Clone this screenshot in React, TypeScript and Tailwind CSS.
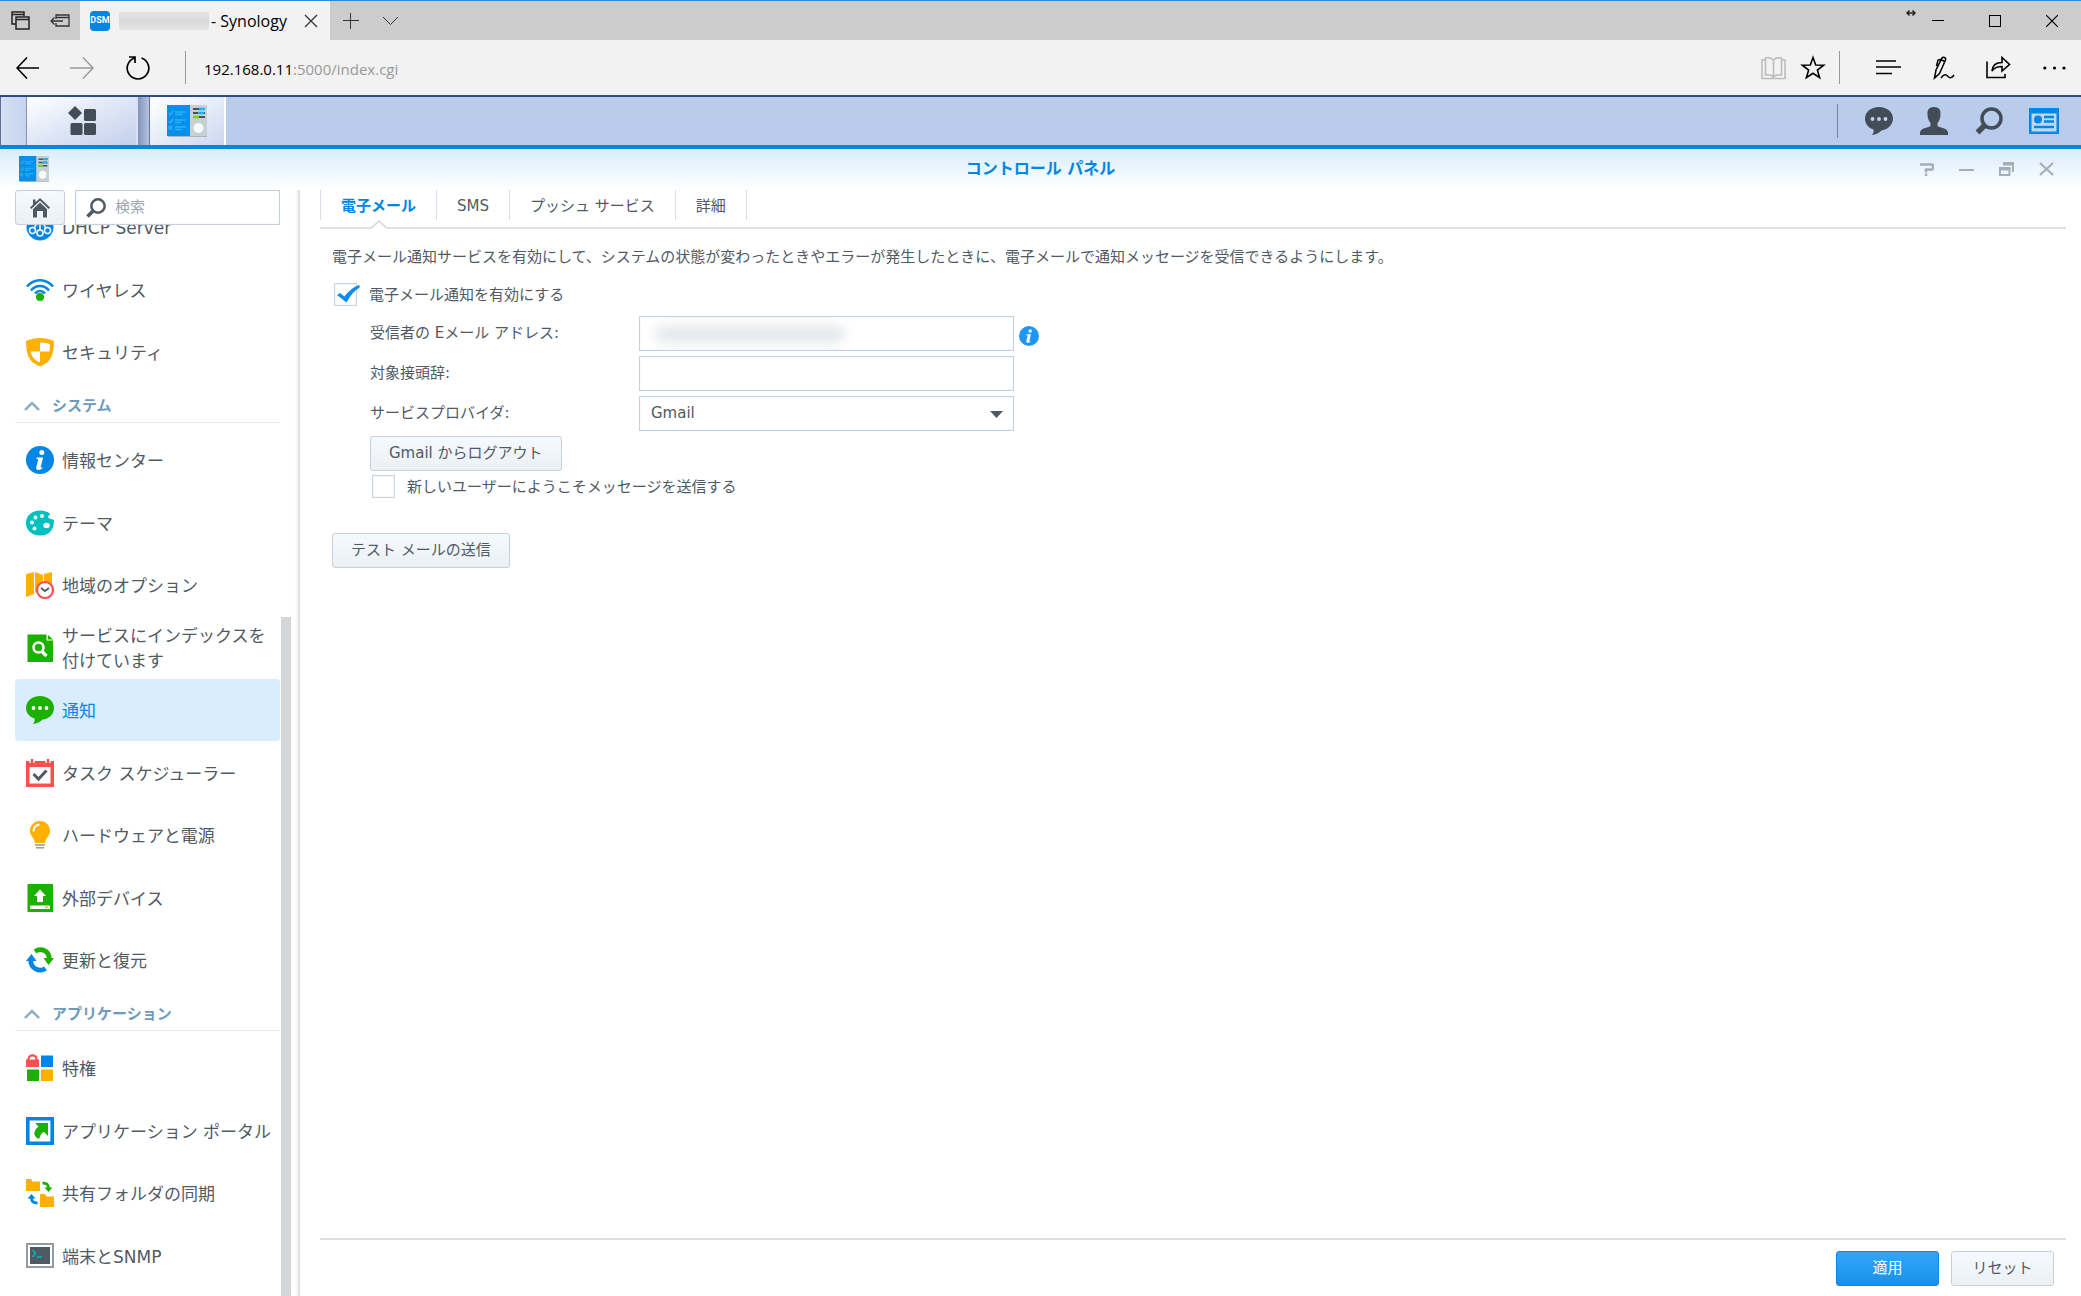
import type { ReactNode } from "react";

const Svg = ({ w, h, children }: { w: number; h: number; children: ReactNode }) => (
  <svg width={w} height={h} viewBox={`0 0 ${w} ${h}`} fill="none" className="shrink-0" aria-hidden="true">
    {children}
  </svg>
);

const ControlPanelIcon = ({ w, h }: { w: number; h: number }) => (
  <svg width={w} height={h} viewBox="0 0 40 32" preserveAspectRatio="none" className="shrink-0" aria-hidden="true">
    <rect x="1" y="2" width="39" height="30" fill="#8d9499" opacity=".6" />
    <rect x="22" width="18" height="31" fill="#c9d0d4" />
    <rect width="23" height="31" fill="#0a8fe8" />
    <g stroke="#26b4ff" strokeWidth="1.3" fill="none">
      <path d="M2 8l1.5 1.5L6 6M2 16l1.5 1.5L6 14" />
      <circle cx="3.500" cy="23" r="1.500" />
      <path d="M8 7h11M8 9.500h8M8 15h11M8 17.500h6M8 22h11M8 24.500h7" />
    </g>
    <path d="M26 4h12M26 8h12M26 12h12" stroke="#4a545c" strokeWidth="2" />
    <path d="M32 4h6M31 8h6" stroke="#15b8f5" strokeWidth="2.500" />
    <path d="M26 12h6" stroke="#78d400" strokeWidth="2.500" />
    <circle cx="31.500" cy="23" r="5" fill="#f2fbff" />
  </svg>
);

const TitleBar = () => (
  <header className="flex h-10 items-stretch border-t border-[#2b88d8] bg-[#cccccc] font-['Open_Sans','Noto_Sans',sans-serif]">
    <div className="flex w-20 items-center gap-5 pl-[11px]">
      <button aria-label="Tabs you set aside">
        <Svg w={19} h={19}>
          <path d="M5 13H1V1h12v4M1 3.500h12M5 6h13v12H5zM5 8.500h13" stroke="#222" strokeWidth="1.500" />
        </Svg>
      </button>
      <button aria-label="Set tabs aside">
        <Svg w={20} h={14}>
          <path d="M6 5V1h13v11H6V9M6 3.500h13M1 7h12M4.500 3.500L1 7l3.500 3.500" stroke="#333" strokeWidth="1.300" />
        </Svg>
      </button>
    </div>
    <div className="flex w-[250px] items-center bg-[#f2f2f2] pr-3 pl-[10px]">
      <span className="flex size-5 items-center justify-center rounded-sm bg-[#0086e5] font-['Roboto',sans-serif] text-[9px] font-bold text-white">
        DSM
      </span>
      <span className="ml-[9px] h-[18px] w-[90px] bg-linear-to-b from-[#e3e3e3] via-[#d9d9d9] to-[#e3e3e3]" />
      <span className="ml-[2px] flex-1 text-base leading-5 whitespace-nowrap text-black">- Synology</span>
      <button aria-label="Close tab">
        <Svg w={14} h={14}>
          <path d="M1 1l12 12M13 1L1 13" stroke="#333" strokeWidth="1.300" />
        </Svg>
      </button>
    </div>
    <div className="flex items-center gap-6 pl-[13px]">
      <button aria-label="New tab">
        <Svg w={16} h={16}>
          <path d="M7.500 0v16M0 7.500h16" stroke="#333" />
        </Svg>
      </button>
      <button aria-label="Show tab previews">
        <Svg w={16} h={10}>
          <path d="M0 1l7.500 7.500L15 1" stroke="#333" />
        </Svg>
      </button>
    </div>
    <div className="ml-auto flex pr-2">
      <span className="pt-[8px]">
        <Svg w={10} h={8}>
          <path d="M2 4h6M3.500 1.500L1 4l2.500 2.500M6.500 1.500L9 4 6.500 6.500" stroke="#222" strokeWidth="1.500" />
        </Svg>
      </span>
      <button aria-label="Minimize" className="flex w-[43px] items-center justify-center">
        <Svg w={12} h={12}>
          <path d="M0 5.500h12" stroke="#000" />
        </Svg>
      </button>
      <button aria-label="Maximize" className="flex w-[71px] items-center justify-center">
        <Svg w={12} h={12}>
          <rect x=".5" y=".5" width="11" height="11" stroke="#000" />
        </Svg>
      </button>
      <button aria-label="Close" className="flex w-[43px] items-center justify-center">
        <Svg w={12} h={12}>
          <path d="M0 0l12 12M12 0L0 12" stroke="#000" strokeWidth="1.200" />
        </Svg>
      </button>
    </div>
  </header>
);

const AddressBar = () => (
  <div className="flex h-[55px] items-center bg-[#f2f2f2] font-['Open_Sans','Noto_Sans',sans-serif]">
    <button aria-label="Back" className="ml-4">
      <Svg w={24} h={24}>
        <path d="M23 12H1M11 1.500L1 12l10 10.500" stroke="#000" strokeWidth="1.600" />
      </Svg>
    </button>
    <button aria-label="Forward" className="ml-[30px]" disabled>
      <Svg w={24} h={24}>
        <path d="M0 12h23M13 1.500L23 12 13 22.500" stroke="#999" strokeWidth="1.400" />
      </Svg>
    </button>
    <button aria-label="Refresh" className="ml-8">
      <Svg w={24} h={24}>
        <path d="M15.500 2A10.800 10.800 0 1 1 8.500 2M3 1h6v6" stroke="#000" strokeWidth="1.700" />
      </Svg>
    </button>
    <span className="ml-[35px] h-[33px] w-px bg-[#999]" />
    <div role="textbox" aria-label="Address" className="ml-[18px] pt-[2px] text-[15px] leading-5 text-[#999]">
      <span className="text-black">192.168.0.11</span>:5000/index.cgi
    </div>
    <div className="ml-auto flex items-center pr-[15px]">
      <button aria-label="Reading view" disabled>
        <Svg w={25} h={24}>
          <path
            d="M12.500 4v17M12.500 4C10 1.500 7 1.500 4.500 2v17c3-.5 6-.3 8 2 2-2.300 5-2.500 8-2V2c-2.500-.5-5.500-.5-8 2M4.500 4H1v18.500h23V4h-3.500"
            stroke="#bbb"
            strokeWidth="1.500"
          />
        </Svg>
      </button>
      <button aria-label="Add to favorites" className="ml-[14px]">
        <Svg w={26} h={25}>
          <path d="M13 2.500l2.700 7.500 8 .2-6.300 4.900 2.200 7.600-6.600-4.400-6.600 4.400 2.200-7.600-6.300-4.900 8-.2z" stroke="#000" strokeWidth="1.600" />
        </Svg>
      </button>
      <span className="ml-[13px] h-[33px] w-px bg-[#999]" />
      <button aria-label="Hub" className="ml-9">
        <Svg w={25} h={24}>
          <path d="M0 5h20M0 11h25M0 17.500h16" stroke="#000" strokeWidth="1.500" />
        </Svg>
      </button>
      <button aria-label="Make a web note" className="ml-8">
        <Svg w={23} h={24}>
          <path
            d="M1.500 22L3 14 9 2c1-1.500 4.500-.5 3.500 2l-6 13.500zM8.500 4l3.500 1.500M9 3L5 4 3.500 10M8 22c3-4 5-4 7-1.500 2 2 4 1.500 6-1.500"
            stroke="#000"
            strokeWidth="1.500"
          />
        </Svg>
      </button>
      <button aria-label="Share" className="ml-[30px]">
        <Svg w={25} h={24}>
          <path d="M1 5.500v16h18V18M6 15c.5-6 4-8.500 10-8.500V1.500l7.500 7-7.500 6.500v-4.500C11 10.500 8 12 6 15z" stroke="#000" strokeWidth="1.600" />
        </Svg>
      </button>
      <button aria-label="More" className="ml-8">
        <Svg w={23} h={24}>
          <g fill="#000">
            <circle cx="1.800" cy="12" r="1.600" />
            <circle cx="11.500" cy="12" r="1.600" />
            <circle cx="21" cy="12" r="1.600" />
          </g>
        </Svg>
      </button>
    </div>
  </div>
);

const TaskBar = () => (
  <nav className="flex h-[54px] border-t-2 border-b-4 border-t-[#2a4a86] border-b-[#0086e5] bg-linear-to-b from-[#b9ceeb] to-[#b9caeb]">
    <div className="w-[27px] border-x border-l-[#5d6f92] border-r-[#8593ae] bg-linear-to-r from-[#d5e0f3] to-[#c6d3ee]" />
    <button
      aria-label="Main menu"
      className="flex w-[111px] items-center justify-center border-r-2 border-[#d8e1f3] bg-linear-to-br from-white via-[#dfe6f5] to-[#c3d0ec]"
    >
      <Svg w={30} h={30}>
        <g fill="#434d58">
          <path d="M8 0l7 7-7 7-7-7z" />
          <rect x="17" y="3" width="12" height="12" rx="1.500" />
          <rect x="3.500" y="17" width="12" height="12" rx="1.500" />
          <rect x="17" y="17" width="12" height="12" rx="1.500" />
        </g>
      </Svg>
    </button>
    <div className="w-[11px] bg-linear-to-r from-[#8294b8] to-[#b3c3e2]" />
    <button
      aria-label="コントロール パネル"
      className="flex w-[77px] items-center justify-center border-r-2 border-l border-l-[#66779c] border-r-white bg-linear-to-br from-white via-[#e6ecf8] to-[#ccd8f0]"
    >
      <ControlPanelIcon w={40} h={32} />
    </button>
    <div className="ml-auto flex items-center pr-[22px]">
      <span className="h-[34px] w-px bg-[#74839f]" />
      <button aria-label="Notifications" className="ml-[27px]">
        <Svg w={28} h={28}>
          <path d="M14 0c8 0 14 5 14 11.500C28 18 22 23 16.500 23.500 14 26 11 27.500 7 28c1.500-2 2-3.500 1.500-5.500C3.500 21 0 17 0 11.500 0 5 6 0 14 0z" fill="#434d58" />
          <g fill="#c3d3ee">
            <circle cx="7.500" cy="12" r="1.900" />
            <circle cx="14" cy="12" r="1.900" />
            <circle cx="20.500" cy="12" r="1.900" />
          </g>
        </Svg>
      </button>
      <button aria-label="User" className="ml-[27px]">
        <Svg w={28} h={28}>
          <path
            d="M14 0c5 0 7 3 6.500 7.500 0 4-1.500 6.500-3 8.500v3c3 2 10 2 10.500 6.500V28H0v-2.500C.5 21 7.500 21 10.500 19v-3c-1.500-2-3-4.500-3-8.500C7 3 9 0 14 0z"
            fill="#434d58"
          />
        </Svg>
      </button>
      <button aria-label="Search" className="ml-[27px]">
        <Svg w={28} h={28}>
          <circle cx="16.500" cy="11.500" r="9.500" stroke="#434d58" strokeWidth="3.500" />
          <path d="M9 19l-6.500 6.500" stroke="#434d58" strokeWidth="5.500" />
        </Svg>
      </button>
      <button aria-label="Widgets" className="ml-[26px]">
        <Svg w={30} h={26}>
          <path d="M0 0h30v26H0z" fill="#0086e5" />
          <path d="M2.500 5.500h25v18h-25z" fill="#c3d6f1" />
          <circle cx="9" cy="11.500" r="4" fill="#0086e5" />
          <path d="M15 9h10M15 13.500h10M5 19h20" stroke="#0086e5" strokeWidth="2.300" />
        </Svg>
      </button>
    </div>
  </nav>
);

const WindowHeader = () => (
  <div className="grid h-[41px] grid-cols-[1fr_auto_1fr] items-center bg-linear-to-b from-[#d9edfb] to-white px-[19px] pb-[2px]">
    <ControlPanelIcon w={30} h={26} />
    <h1 className="text-base leading-6 font-bold text-[#0086e5]">コントロール パネル</h1>
    <div className="flex items-center justify-end gap-[25px] pr-2">
      <button aria-label="ヘルプ">
        <Svg w={14} h={14}>
          <path d="M0 2.500h11.500q1.500 0 1.500 1.500v2q0 1.500-1.500 1.500H6v3M6 11.500V14" stroke="#a3b0b9" strokeWidth="2.500" />
        </Svg>
      </button>
      <button aria-label="最小化">
        <Svg w={15} h={14}>
          <path d="M0 8h15" stroke="#a3b0b9" strokeWidth="2" />
        </Svg>
      </button>
      <button aria-label="元に戻す">
        <Svg w={15} h={14}>
          <path d="M4 2h10v8M1 7h9.500v6H1z" stroke="#a3b0b9" strokeWidth="2" />
          <path d="M4 0h11v3.500H4zM0 5h11.500v3.500H0z" fill="#a3b0b9" />
        </Svg>
      </button>
      <button aria-label="閉じる">
        <Svg w={15} h={14}>
          <path d="M1 1l13 12M14 1L1 13" stroke="#a3b0b9" strokeWidth="2.200" />
        </Svg>
      </button>
    </div>
  </div>
);

const icons: Record<string, ReactNode> = {
  dhcp: (
    <>
      <circle cx="14" cy="14" r="13.500" fill="#0086e5" />
      <g stroke="#fff" strokeWidth="1.500">
        <circle cx="6.500" cy="17.500" r="3" />
        <circle cx="14" cy="20" r="3" />
        <circle cx="21.500" cy="17.500" r="3" />
        <path d="M14 8v9M8 15l4-6M20 15l-4-6" />
      </g>
    </>
  ),
  wireless: (
    <>
      <path d="M1 10.500C8 2 20 2 27 10.500M5 14.500c5-6 13-6 18 0M9 17.500c3-3.500 7-3.500 10 0" stroke="#0086e5" strokeWidth="2.500" />
      <circle cx="14" cy="21" r="4" fill="#1eb000" />
    </>
  ),
  security: (
    <>
      <path d="M0 3c9-4 19-4 28 0-.5 12-1 20-14 25.500C1 23 .5 15 0 3z" fill="#ffb000" />
      <path d="M14 4.500c4 0 7 .6 10 1.500l-.5 7.500H14zM14 13.500v10.800C8.500 22 5.500 19 4.700 13.500z" fill="#fff" />
    </>
  ),
  info: (
    <>
      <circle cx="14" cy="14" r="14" fill="#0086e5" />
      <circle cx="15.800" cy="6.500" r="2.500" fill="#fff" />
      <path d="M10.500 11.500h6.700l-2.500 9.500c0 1 1 .8 2.300.3-1 3-7.500 4-6.800.2l2-8c-.5-.6-1.200-.6-1.700-.6z" fill="#fff" />
    </>
  ),
  theme: (
    <>
      <path d="M14 1.500c4 0 8 1.500 10.500 3.500-2 1.500-3.500 3-1 4.500 1.500.8 3.500.5 4.500 1.500 0 8-3 15.500-14 15.500C6 26.500 0 21.500 0 14S6 1.500 14 1.500z" fill="#00bfc0" />
      <g fill="#fff">
        <circle cx="9.500" cy="8.500" r="2" />
        <circle cx="16" cy="7" r="2" />
        <circle cx="6" cy="13.500" r="2" />
        <circle cx="8.500" cy="19.500" r="2" />
        <ellipse cx="20.500" cy="16.500" rx="3.200" ry="2.800" />
      </g>
    </>
  ),
  region: (
    <>
      <path d="M0 3l8-2v22l-8 3zM9 1l8 3v9l-8 9zM18 3l8-2v12h-8z" fill="#ffb000" />
      <circle cx="19" cy="19" r="8" fill="#fff" stroke="#fa5050" strokeWidth="2.200" />
      <path d="M15 17l4 3 4-3" stroke="#505a64" strokeWidth="1.800" />
    </>
  ),
  index: (
    <>
      <path d="M1.500.5h19v6H27V28H1.500zM22 1l5 4.500h-5z" fill="#1eb000" />
      <circle cx="12.500" cy="13.500" r="5" stroke="#fff" strokeWidth="2.500" />
      <path d="M16 17.500l4.500 4.500" stroke="#fff" strokeWidth="3.200" />
    </>
  ),
  notification: (
    <>
      <path d="M14 0c8 0 14 5 14 12 0 6.500-5 11-11.500 11.500C14 26 11 27.500 7 28c1.500-2 2-3.500 1.500-5.500C3.500 21 0 17 0 12 0 5 6 0 14 0z" fill="#1eb000" />
      <g fill="#fff">
        <circle cx="7.500" cy="12" r="1.900" />
        <circle cx="14" cy="12" r="1.900" />
        <circle cx="20.500" cy="12" r="1.900" />
      </g>
    </>
  ),
  task: (
    <>
      <path d="M0 2h28v26H0z" fill="#fa5050" />
      <path d="M3.500 8h21v16.500h-21zM3.500 0h5v4h-5zM19.500 0h5v4h-5z" fill="#fff" />
      <path d="M6 0v5M22 0v5" stroke="#fa5050" strokeWidth="2.500" />
      <path d="M7.500 15l5 5 8-8.500" stroke="#505a64" strokeWidth="3" />
    </>
  ),
  hardware: (
    <>
      <path d="M14 0c6 0 10 4.500 10 10 0 5-4.500 7-5 12H9c-.5-5-5-7-5-12C4 4.500 8 0 14 0z" fill="#ffb000" />
      <path d="M7.500 10.500c0-4 2.500-6.500 6-7" stroke="#fff" strokeWidth="2" />
      <path d="M9 24h10M10 26.700h8" stroke="#8f9ba5" strokeWidth="1.500" />
    </>
  ),
  external: (
    <>
      <path d="M1.500 0H27v28H1.500z" fill="#1eb000" />
      <path d="M14 5.500l6 6.500h-3v6h-6v-6H8zM4 21.500h20v3.500H4z" fill="#fff" />
      <path d="M19 23.300h3" stroke="#ffb000" strokeWidth="1.500" />
    </>
  ),
  update: (
    <>
      <path d="M9 5.500c6-4 14-1 14.200 7" stroke="#1eb000" strokeWidth="4.800" />
      <path d="M17.500 12H28l-5.500 7z" fill="#1eb000" />
      <path d="M19.500 22.500c-6 4-14.500 0-14.700-7.500" stroke="#0086e5" strokeWidth="4.800" />
      <path d="M10.500 15H0l5.500-7z" fill="#0086e5" />
    </>
  ),
  privilege: (
    <>
      <path d="M0 5.500h13V13H0z" fill="#fa5050" />
      <path d="M2.500 7V5.500c0-5.500 8-5.500 8 0V7" stroke="#fa5050" strokeWidth="2.300" />
      <path d="M15 1.500h12V13H15z" fill="#0086e5" />
      <path d="M1 15.500h12V27H1z" fill="#1eb000" />
      <path d="M15 15.500h12V27H15z" fill="#ffb000" />
    </>
  ),
  portal: (
    <>
      <path d="M1.800 1.800h24.400v24.400H1.800z" fill="#fff" stroke="#0086e5" strokeWidth="3.600" />
      <path d="M9 6h13v13l-4-4c-3 1-3.500 4-5 7-5-2-7-7-.5-12.500z" fill="#1eb000" />
    </>
  ),
  sync: (
    <>
      <path d="M0 0h5l1.500 2.500H14v9.500H0zM14 15h5l1.500 2.500H28V28H14z" fill="#ffb000" />
      <path d="M16.500 4c5 0 6 2 6 5.500" stroke="#1eb000" strokeWidth="3" />
      <path d="M18.500 8.500h8l-4 4.500z" fill="#1eb000" />
      <path d="M11.500 24c-5 0-6-2-6-5" stroke="#0086e5" strokeWidth="3" />
      <path d="M1.500 19.500h8l-4-4.500z" fill="#0086e5" />
    </>
  ),
  terminal: (
    <>
      <path d="M1 2h26v23H1z" fill="#fff" stroke="#8f9ba5" strokeWidth="2" />
      <path d="M4 5h20v17H4z" fill="#505a64" />
      <path d="M6.500 8l3 3.500-3 3.500M11 15h5" stroke="#00b3b3" strokeWidth="1.700" />
    </>
  ),
};

type Item = { icon: string; label: string };

const networkItems: Item[] = [
  { icon: "dhcp", label: "DHCP Server" },
  { icon: "wireless", label: "ワイヤレス" },
  { icon: "security", label: "セキュリティ" },
];

const systemItems: Item[] = [
  { icon: "info", label: "情報センター" },
  { icon: "theme", label: "テーマ" },
  { icon: "region", label: "地域のオプション" },
  { icon: "index", label: "サービスにインデックスを付けています" },
  { icon: "notification", label: "通知" },
  { icon: "task", label: "タスク スケジューラー" },
  { icon: "hardware", label: "ハードウェアと電源" },
  { icon: "external", label: "外部デバイス" },
  { icon: "update", label: "更新と復元" },
];

const applicationItems: Item[] = [
  { icon: "privilege", label: "特権" },
  { icon: "portal", label: "アプリケーション ポータル" },
  { icon: "sync", label: "共有フォルダの同期" },
  { icon: "terminal", label: "端末とSNMP" },
];

const NavList = ({ items }: { items: Item[] }) => (
  <ul>
    {items.map(({ icon, label }) => {
      const active = icon === "notification";
      return (
        <li key={icon} className="h-[62px] even:h-[63px]">
          <a
            href={`#${icon}`}
            className={`flex h-full items-center gap-2 rounded-sm pl-[11px] text-[17px] leading-[25px] ${
              active ? "bg-[#d9edff] text-[#0086e5]" : "text-[#505a64]"
            }`}
          >
            <Svg w={28} h={28}>
              {icons[icon]}
            </Svg>
            <span className="pt-[3px]">{label}</span>
          </a>
        </li>
      );
    })}
  </ul>
);

const NavHeading = ({ children }: { children: ReactNode }) => (
  <h2 className="mb-[6px] h-10 border-b border-[#e3edf5]">
    <button className="flex h-full w-full items-center gap-3 pt-[7px] pl-[9px] text-[15px] font-bold text-[#6f9bbb]">
      <Svg w={16} h={10}>
        <path d="M1 9l7-7 7 7" stroke="#8fb0c8" strokeWidth="2.500" />
      </Svg>
      {children}
    </button>
  </h2>
);

const SideBar = () => (
  <aside className="flex w-[300px] shrink-0 flex-col border-r-2 border-[#e0e0e0] pl-[15px] shadow-[inset_-3px_0_3px_-2px_#ececec]">
    <div className="flex h-[35px] shrink-0 gap-[10px] pr-[18px]">
      <button
        aria-label="ホーム"
        className="flex w-[50px] items-center justify-center rounded-[3px] border border-[#c6d0dc] bg-linear-to-b from-[#f6faff] to-[#ebf0f5]"
      >
        <Svg w={20} h={20}>
          <path d="M10 0l10 9.500-1.300 1.500L10 2.800 1.300 11 0 9.500zM3 1.500h2.500V5L3 7.300z" fill="#505a64" />
          <path d="M10 4.500l7 6.500v8.500h-4V13H7v6.500H3V11z" fill="#505a64" />
        </Svg>
      </button>
      <label className="flex flex-1 items-center gap-[9px] border border-[#c6d0dc] bg-white pl-[10px] shadow-[inset_0_0_2px_#e4eaf0]">
        <Svg w={20} h={20}>
          <circle cx="12" cy="8" r="6.700" stroke="#505a64" strokeWidth="2.500" />
          <path d="M7 13l-5.500 5.500" stroke="#505a64" strokeWidth="3.800" />
        </Svg>
        <input
          type="text"
          aria-label="検索"
          placeholder="検索"
          className="w-full min-w-0 bg-transparent text-[15px] outline-none placeholder:text-[#9aa5af]"
        />
      </label>
    </div>
    <div className="flex min-h-0 flex-1 overflow-hidden">
      <nav className="-mt-[29px] w-[265px] shrink-0">
        <NavList items={networkItems} />
        <NavHeading>システム</NavHeading>
        <NavList items={systemItems} />
        <NavHeading>アプリケーション</NavHeading>
        <NavList items={applicationItems} />
      </nav>
      <div className="flex w-[11px] flex-col pt-[392px] pl-px">
        <div className="flex-1 bg-[#d4d6d8]" />
      </div>
    </div>
  </aside>
);

const tabs = ["電子メール", "SMS", "プッシュ サービス", "詳細"];

const Tabs = () => (
  <div role="tablist" className="flex h-[39px] shrink-0 items-start border-b-2 border-[#e0e0e0]">
    {tabs.map((tab, i) => (
      <button
        key={tab}
        role="tab"
        aria-selected={i === 0}
        className={`relative h-[30px] border-r border-[#d3deea] px-5 pt-px text-[15px] leading-[30px] ${
          i === 0 ? "border-l font-bold text-[#0086e5]" : "text-[#505a64]"
        }`}
      >
        {tab}
        {i === 0 && (
          <span className="absolute top-[30px] left-[49px]">
            <Svg w={18} h={10}>
              <path d="M0 10V8l2-1 7-6.500L16 7l2 1v2z" fill="#fff" />
              <path d="M0 8l2-.5L9 1l7 6.500 2 .5" stroke="#dadada" strokeWidth="1.700" />
            </Svg>
          </span>
        )}
      </button>
    ))}
  </div>
);

const CheckBox = ({ label, checked }: { label: string; checked?: boolean }) => (
  <label className="flex items-center gap-3 text-[15px] leading-[23px]">
    <span className="relative size-[23px] shrink-0">
      <input type="checkbox" defaultChecked={checked} className="peer block size-[23px] appearance-none border border-[#ccd6df] bg-white shadow-[inset_0_0_2px_#dce3ea]" />
      <span className="pointer-events-none absolute top-[2px] left-[3px] hidden peer-checked:block">
        <Svg w={23} h={18}>
          <path d="M0 10l3-2 4.500 3.500C11 7 16 2 22 0l1 2C17 6 13 11 9.500 17.500z" fill="#0a8cf0" />
        </Svg>
      </span>
    </span>
    <span className="pt-[2px]">{label}</span>
  </label>
);

const fieldClass = "h-[35px] w-[375px] border border-[#c6d0dc] bg-white px-[11px] text-[15px] text-[#505a64] shadow-[inset_0_0_2px_#e4eaf0]";

const buttonClass =
  "h-[35px] rounded-[3px] border border-[#c6d0dc] bg-linear-to-b from-[#f6faff] to-[#ebf0f5] px-[18px] text-[15px] text-[#505a64]";

const EmailForm = () => (
  <form className="flex flex-1 flex-col items-start pt-[17px] pl-3 text-[15px] text-[#505a64]">
    <p className="leading-[23px]">
      電子メール通知サービスを有効にして、システムの状態が変わったときやエラーが発生したときに、電子メールで通知メッセージを受信できるようにします。
    </p>
    <div className="mt-[13px] pl-[2px]">
      <CheckBox label="電子メール通知を有効にする" checked />
    </div>
    <div className="mt-[9px] grid grid-cols-[269px_auto] items-center gap-y-[5px] pl-[38px]">
      <label htmlFor="recipient">受信者の Eメール アドレス:</label>
      <div className="flex items-center gap-[5px]">
        <div className="relative">
          <input id="recipient" type="email" className={`block ${fieldClass}`} />
          <span className="pointer-events-none absolute top-[10px] left-4 h-4 w-[190px] rounded-full bg-[#e4e6e8] blur-[6px]" />
        </div>
        <button type="button" aria-label="情報" className="mt-1">
          <Svg w={20} h={20}>
            <circle cx="10" cy="10" r="10" fill="#1e96f5" />
            <circle cx="11.200" cy="5" r="1.700" fill="#fff" />
            <path d="M7.500 8.300H12l-1.700 6.500c0 .7.700.5 1.500.2-.7 2-4.900 2.700-4.500.2l1.400-5.500c-.4-.4-.8-.4-1.200-.4z" fill="#fff" />
          </Svg>
        </button>
      </div>
      <label htmlFor="prefix">対象接頭辞:</label>
      <input id="prefix" type="text" className={fieldClass} />
      <label htmlFor="provider">サービスプロバイダ:</label>
      <div className="relative w-[375px]">
        <select id="provider" className={`block appearance-none ${fieldClass}`}>
          <option>Gmail</option>
        </select>
        <span className="pointer-events-none absolute top-[15px] right-[11px]">
          <Svg w={13} h={7}>
            <path d="M0 0h13L6.500 7z" fill="#505a64" />
          </Svg>
        </span>
      </div>
    </div>
    <button type="button" className={`mt-[5px] ml-[38px] ${buttonClass}`}>
      Gmail からログアウト
    </button>
    <div className="mt-[3px] pl-10">
      <CheckBox label="新しいユーザーにようこそメッセージを送信する" />
    </div>
    <button type="button" className={`mt-[34px] ${buttonClass}`}>
      テスト メールの送信
    </button>
  </form>
);

const App = () => {
  return (
    <div className="flex h-screen flex-col overflow-hidden bg-white">
      <TitleBar />
      <AddressBar />
      <div lang="ja" className="flex min-h-0 flex-1 flex-col font-['DejaVu_Sans','Noto_Sans_CJK_JP',sans-serif]">
        <TaskBar />
        <WindowHeader />
        <div className="flex min-h-0 flex-1">
          <SideBar />
          <main className="flex min-w-0 flex-1 flex-col pr-[15px] pl-5">
            <Tabs />
            <EmailForm />
            <footer className="flex h-[58px] shrink-0 justify-end gap-3 border-t-2 border-[#e0e0e0] pt-[11px] pr-3">
              <button className="h-[35px] w-[103px] rounded-[3px] border border-[#1583d8] bg-linear-to-b from-[#31a6ff] to-[#1a90e8] text-[15px] text-white">
                適用
              </button>
              <button className="h-[35px] w-[103px] rounded-[3px] border border-[#c6d0dc] bg-linear-to-b from-[#f6faff] to-[#ebf0f5] text-[15px] text-[#505a64]">
                リセット
              </button>
            </footer>
          </main>
        </div>
      </div>
    </div>
  );
};

export default App;
